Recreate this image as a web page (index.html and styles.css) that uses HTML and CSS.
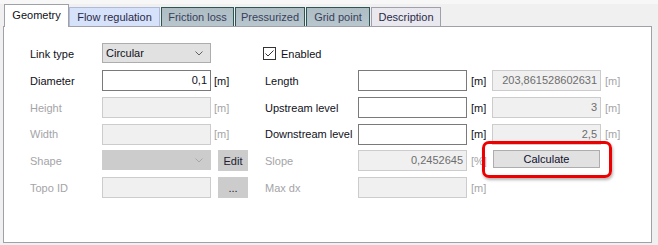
FILE: index.html
```html
<!DOCTYPE html>
<html lang="en">
<head>
  <meta charset="UTF-8" />
  <title>Link properties</title>
  <link rel="stylesheet" href="styles.css">
</head>
<body>
  <div class="tabs">
    <div class="tab tab-active w-geo">Geometry</div>
    <div class="tab tab-blue w-flow">Flow regulation</div>
    <div class="tab tab-dark w-fric">Friction loss</div>
    <div class="tab tab-dark w-press">Pressurized</div>
    <div class="tab tab-dark w-grid">Grid point</div>
    <div class="tab tab-light w-desc">Description</div>
  </div>

  <div class="panel">
    <div class="form-grid">
      <!-- row 1 -->
      <div class="label">Link type</div>
      <div class="combo">
        <span>Circular</span>
        <svg width="8" height="5" viewBox="0 0 8 5"><polyline points="0.5,0.5 4,4 7.5,0.5" fill="none" stroke="#606060" stroke-width="1"/></svg>
      </div>
      <div class="check-row">
        <svg class="check" width="13" height="13" viewBox="0 0 13 13">
          <rect x="0.5" y="0.5" width="12" height="12" fill="#fff" stroke="#333"/>
          <polyline points="2.5,6.5 5,9 10.5,3.5" fill="none" stroke="#333" stroke-width="1"/>
        </svg>
        <span>Enabled</span>
      </div>

      <!-- row 2 -->
      <div class="label">Diameter</div>
      <div class="field">0,1</div>
      <div class="unit">[m]</div>
      <div class="label col-r">Length</div>
      <div class="field"></div>
      <div class="unit unit-r">[m]</div>
      <div class="field off">203,861528602631</div>
      <div class="unit unit-r off-text">[m]</div>

      <!-- row 3 -->
      <div class="label off-text">Height</div>
      <div class="field off"></div>
      <div class="unit off-text">[m]</div>
      <div class="label col-r">Upstream level</div>
      <div class="field"></div>
      <div class="unit unit-r">[m]</div>
      <div class="field off">3</div>
      <div class="unit unit-r off-text">[m]</div>

      <!-- row 4 -->
      <div class="label off-text">Width</div>
      <div class="field off"></div>
      <div class="unit off-text">[m]</div>
      <div class="label col-r">Downstream level</div>
      <div class="field"></div>
      <div class="unit unit-r">[m]</div>
      <div class="field off">2,5</div>
      <div class="unit unit-r off-text">[m]</div>

      <!-- row 5 -->
      <div class="label off-text">Shape</div>
      <div class="combo combo-off">
        <span></span>
        <svg width="8" height="5" viewBox="0 0 8 5"><polyline points="0.5,0.5 4,4 7.5,0.5" fill="none" stroke="#a8a8a8" stroke-width="1"/></svg>
      </div>
      <div class="small-btn">Edit</div>
      <div class="label col-r off-text">Slope</div>
      <div class="field off">0,2452645</div>
      <div class="unit unit-r off-text">[%]</div>
      <div class="calc-wrap">
        <div class="calc-btn">Calculate</div>
      </div>

      <!-- row 6 -->
      <div class="label off-text">Topo ID</div>
      <div class="field off"></div>
      <div class="small-btn">...</div>
      <div class="label col-r off-text">Max dx</div>
      <div class="field off"></div>
      <div class="unit unit-r off-text">[m]</div>
    </div>
  </div>
</body>
</html>
```

FILE: styles.css
```css
body {
  font-family: 'Liberation Sans', Arial, sans-serif;
  font-size: 11px;
  color: #101020;
  margin: 0;
  padding: 0;
  background-color: #f0f0f0;
  width: 658px;
  height: 245px;
  overflow: hidden;
}
.tabs {
  display: flex;
  align-items: flex-end;
  height: 26px;
  padding-left: 4px;
  border-top: 4px solid #f7f7f7;
  box-sizing: border-box;
  position: relative;
  z-index: 1;
}
.tab {
  height: 19px;
  box-sizing: border-box;
  display: flex;
  align-items: center;
  justify-content: center;
  border: 1px solid #a0a0a8;
  border-bottom: none;
  color: #2a2a48;
  font-size: 11px;
  margin-right: 1px;
}
.tab-active {
  height: 23px;
  margin-bottom: -1px;
  background-color: #fff;
  border-color: #a0a0a8;
  color: #101020;
  margin-right: 0;
  padding-bottom: 2px;
}
.tab-blue {
  background-color: #d6e2fa;
  border-color: #b0bad8;
}
.tab-dark {
  background: linear-gradient(#aebcc4, #b8c6cd);
  border: 1px solid #2f5454;
  border-bottom: none;
  color: #38405a;
}
.tab-light {
  background-color: #e8e8ee;
  border-color: #a0a0ac;
}
.w-geo { width: 65px; }
.w-flow { width: 91px; }
.w-fric { width: 73px; }
.w-press { width: 70px; }
.w-grid { width: 64px; }
.w-desc { width: 70px; }

.panel {
  margin-left: 3px;
  width: 649px;
  height: 217px;
  box-sizing: border-box;
  background-color: #fff;
  border: 1px solid #a0a0a8;
}
.form-grid {
  display: grid;
  grid-template-columns: 72px 109px 37px 17px 93px 109px 25px 109px 1fr;
  grid-template-rows: 21px 21px 21px 20px 21px 21px;
  row-gap: 6px;
  padding: 16px 0 0 26px;
  align-items: center;
}
.label {
  grid-column: 1;
  white-space: nowrap;
}
.col-r {
  grid-column: 5;
}
.off-text {
  color: #a4a4a8;
}
.field {
  height: 21px;
  box-sizing: border-box;
  border: 1px solid #7a7a7a;
  background-color: #fff;
  text-align: right;
  padding: 0 3px;
  line-height: 19px;
  white-space: nowrap;
  overflow: hidden;
  align-self: start;
}
.field.off {
  border-color: #cccccc;
  background-color: #f0f0f0;
  color: #6d6d6d;
}
.unit {
  padding-left: 3px;
}
.unit-r {
  padding-left: 4px;
}
.combo {
  grid-column: 2;
  height: 20px;
  align-self: start;
  box-sizing: border-box;
  border: 1px solid #adadad;
  background-color: #e1e1e1;
  display: flex;
  align-items: center;
  justify-content: space-between;
  padding: 0 7px 0 3px;
}
.combo-off {
  border-color: #cccccc;
  background-color: #cccccc;
}
.check-row {
  grid-column: 5 / 10;
  display: flex;
  align-items: center;
  margin-left: -2px;
}
.check {
  margin-right: 5px;
}
.small-btn {
  margin-left: 7px;
  width: 30px;
  height: 21px;
  align-self: start;
  box-sizing: border-box;
  background-color: #cccccc;
  display: flex;
  align-items: center;
  justify-content: center;
  color: #202030;
}
.calc-wrap {
  grid-column: 8;
  align-self: start;
  position: relative;
  padding: 0 1px;
}
.calc-btn {
  height: 18px;
  box-sizing: border-box;
  border: 1px solid #adadad;
  background-color: #e1e1e1;
  display: flex;
  align-items: center;
  justify-content: center;
  color: #101030;
}
.calc-wrap::after {
  content: '';
  position: absolute;
  top: -9px;
  bottom: -10px;
  left: -10px;
  right: -11px;
  border: 3px solid #ee0000;
  border-radius: 7px;
  box-shadow: 1px 2px 3px rgba(0, 0, 0, 0.3);
}
```
